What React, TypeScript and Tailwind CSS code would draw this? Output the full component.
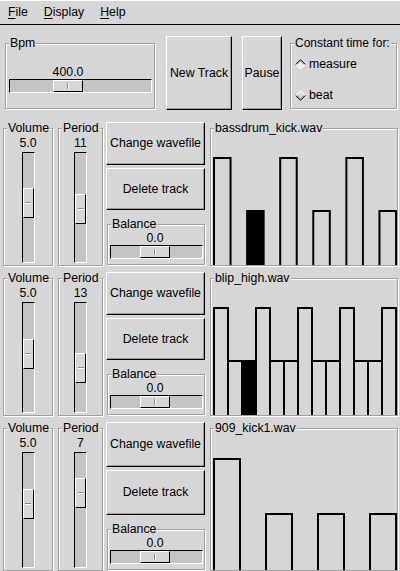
import React from "react"

type Track = {
  file: string
  period: number
  volume: string
  volThumb: string
  perThumb: string
  rowH: string
  svgH: number
  bars: number[] // 0 none, 1 short, 2 tall, 3 short filled
}

const tracks: Track[] = [
  {
    file: "bassdrum_kick.wav",
    period: 11,
    volume: "5.0",
    volThumb: "mt-[35px]",
    perThumb: "mt-[41px]",
    rowH: "h-[145px]",
    svgH: 130,
    bars: [2, 0, 3, 0, 2, 0, 1, 0, 2, 0, 1]
  },
  {
    file: "blip_high.wav",
    period: 13,
    volume: "5.0",
    volThumb: "mt-[36px]",
    perThumb: "mt-[50px]",
    rowH: "h-[145px]",
    svgH: 130,
    bars: [2, 1, 3, 2, 1, 1, 2, 1, 1, 2, 1, 1, 2]
  },
  {
    file: "909_kick1.wav",
    period: 7,
    volume: "5.0",
    volThumb: "mt-[36px]",
    perThumb: "mt-[25px]",
    rowH: "h-[150px]",
    svgH: 135,
    bars: [2, 0, 1, 0, 1, 0, 1]
  }
]

function Frame({
  label,
  className = "",
  legendClass = "",
  children
}: {
  label: string
  className?: string
  legendClass?: string
  children?: React.ReactNode
}) {
  return (
    <fieldset
      className={`min-w-0 border border-[#a0a0a0] shadow-[inset_1px_1px_0_#fff,1px_1px_0_#fff] ${className}`}
    >
      <legend className={`ml-[3px] bg-[#d6d6d6] px-[1px] leading-[14px] ${legendClass}`}>
        {label}
      </legend>
      {children}
    </fieldset>
  )
}

function Button({ className = "", children }: { className?: string; children: React.ReactNode }) {
  return (
    <button
      className={`flex items-center justify-center border border-t-white border-l-white border-r-black border-b-black bg-[#d6d6d6] shadow-[inset_-1px_-1px_0_#9a9a9a] ${className}`}
    >
      {children}
    </button>
  )
}

function HScale({
  value,
  className = "",
  offset
}: {
  value: string
  className?: string
  offset: string
}) {
  return (
    <div className={className}>
      <div className="flex pl-[1px]">
        <div className={`flex w-[30px] justify-center whitespace-nowrap leading-[14px] ${offset}`}>
          {value}
        </div>
      </div>
      <div className="flex h-[14px] border border-t-black border-l-black border-r-white border-b-white bg-[#c4c4c4]">
        <div
          className={`flex h-full w-[30px] items-center justify-center border border-t-white border-l-white border-r-black border-b-black bg-[#d6d6d6] ${offset}`}
        >
          <div className="h-[6px] w-[2px] border-l border-l-[#8a8a8a] border-r border-r-white" />
        </div>
      </div>
    </div>
  )
}

function VScale({ thumb }: { thumb: string }) {
  return (
    <div className="flex w-[13px] flex-1 flex-col border border-t-black border-l-black border-r-white border-b-white bg-[#c4c4c4]">
      <div
        className={`flex h-[30px] w-full shrink-0 items-center justify-center border border-t-white border-l-white border-r-black border-b-black bg-[#d6d6d6] ${thumb}`}
      >
        <div className="h-[2px] w-[6px] border-t border-t-[#8a8a8a] border-b border-b-white" />
      </div>
    </div>
  )
}

function Diamond({ on }: { on?: boolean }) {
  const hi = on ? "#000" : "#fff"
  const lo = on ? "#fff" : "#000"
  return (
    <svg width="11" height="11" viewBox="0 0 11 11" className="shrink-0">
      <path d="M5.5 1 L10 5.5 L5.5 10 L1 5.5 Z" fill={on ? "#ececec" : "#d6d6d6"} />
      <path d="M0.7 5.5 L5.5 0.7 L10.3 5.5" stroke={hi} fill="none" />
      <path d="M0.7 5.5 L5.5 10.3 L10.3 5.5" stroke={lo} fill="none" />
      <path d="M1.9 5.5 L5.5 1.9 L9.1 5.5" stroke={on ? "#7f7f7f" : "#f0f0f0"} fill="none" />
      <path d="M1.9 5.5 L5.5 9.1 L9.1 5.5" stroke={on ? "#f0f0f0" : "#7f7f7f"} fill="none" />
    </svg>
  )
}

function Pattern({ t }: { t: Track }) {
  const sw = 182 / t.period
  const tall = Math.round(t.svgH * 0.83)
  const short = Math.round(t.svgH * 0.42)
  return (
    <svg width={186} height={t.svgH} className="ml-[1px] block">
      {t.bars.map((b, i) => {
        if (!b) return null
        const h = b === 2 ? tall : short
        return (
          <rect
            key={i}
            x={2 + i * sw}
            y={t.svgH - h + 1}
            width={sw}
            height={h + 6}
            fill={b === 3 ? "#000" : "none"}
            stroke="#000"
            strokeWidth={2}
          />
        )
      })}
    </svg>
  )
}

function TrackRow({ t }: { t: Track }) {
  return (
    <div className={`flex ${t.rowH} pl-[3px]`}>
      <Frame label="Volume" className="flex w-[50px] flex-col items-center pb-[2px]">
        <div className="mt-[1px] leading-[14px]">{t.volume}</div>
        <div className="mt-[2px] flex flex-1">
          <VScale thumb={t.volThumb} />
        </div>
      </Frame>
      <Frame label="Period" className="ml-[5px] flex w-[45px] flex-col items-center pb-[2px]">
        <div className="mt-[1px] leading-[14px]">{t.period}</div>
        <div className="mt-[2px] flex flex-1">
          <VScale thumb={t.perThumb} />
        </div>
      </Frame>
      <div className="ml-[3px] flex w-[99px] flex-col pt-[1px] pb-[1px]">
        <Button className="flex-1">Change wavefile</Button>
        <Button className="mt-[3px] flex-1">Delete track</Button>
        <Frame label="Balance" className="ml-[1px] mt-[7px] h-[48px] shrink-0">
          <HScale value="0.0" className="ml-[2px] w-[93px]" offset="ml-[29px]" />
        </Frame>
      </div>
      <Frame label={t.file} className="ml-[5px] w-[188px]">
        <Pattern t={t} />
      </Frame>
    </div>
  )
}

export default function App() {
  return (
    <div className="h-[571px] w-[400px] overflow-hidden bg-[#d6d6d6] font-['Liberation_Sans',Arial,sans-serif] text-[12.3px] text-black">
      <div className="flex h-[25px] items-center gap-[16px] border-t border-t-white border-b border-b-black pl-[8px]">
        <span>
          <u className="underline-offset-[2px]">F</u>ile
        </span>
        <span>
          <u className="underline-offset-[2px]">D</u>isplay
        </span>
        <span>
          <u className="underline-offset-[2px]">H</u>elp
        </span>
      </div>

      <div className="flex items-start pt-[11px]">
        <Frame label="Bpm" className="ml-[5px] h-[73px] w-[150px]">
          <HScale value="400.0" className="ml-[3px] mt-[15px] w-[143px]" offset="ml-[43px]" />
        </Frame>
        <Button className="ml-[11px] h-[74px] w-[66px]">New Track</Button>
        <Button className="ml-[10px] h-[74px] w-[40px]">Pause</Button>
        <Frame
          label="Constant time for:"
          legendClass="text-[12px]"
          className="ml-[8px] h-[73px] w-[107px]"
        >
          <div className="mt-[7px] flex items-center gap-[3px] pl-[4px] leading-[14px]">
            <Diamond on />
            measure
          </div>
          <div className="mt-[17px] flex items-center gap-[3px] pl-[4px] leading-[14px]">
            <Diamond />
            beat
          </div>
        </Frame>
      </div>

      <div className="mt-[11px] flex flex-col gap-[5px]">
        {tracks.map((t) => (
          <TrackRow key={t.file} t={t} />
        ))}
      </div>
    </div>
  )
}
